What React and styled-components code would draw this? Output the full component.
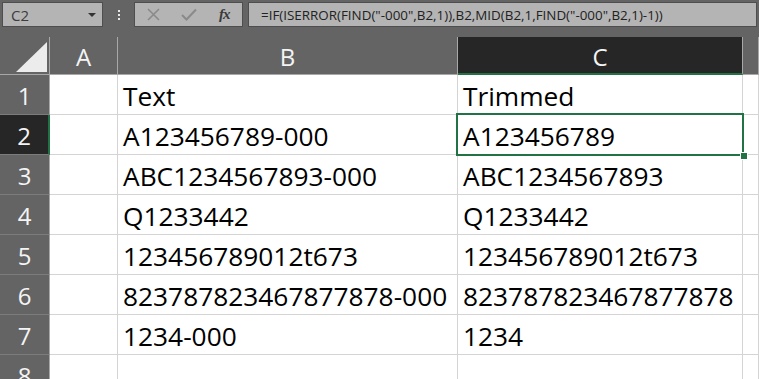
import styled, { createGlobalStyle } from "styled-components";

const GlobalStyle = createGlobalStyle`
  html, body {
    margin: 0;
    padding: 0;
    background: #646464;
  }
  body {
    font-family: "Open Sans", "Noto Sans", sans-serif;
  }
`;

const Window = styled.div`
  width: 759px;
  height: 379px;
  overflow: hidden;
  background: #646464;
  display: flex;
  flex-direction: column;
`;

const FormulaBar = styled.div`
  display: flex;
  flex-shrink: 0;
  height: 37px;
  padding: 2px 2px 10px 2px;
  box-sizing: border-box;
`;

const NameBox = styled.div`
  width: 101px;
  box-sizing: border-box;
  background: #b4b4b4;
  border: 1px solid #4e4e4e;
  display: flex;
  align-items: center;
  justify-content: space-between;
  padding: 0 6px 0 8px;
  font-size: 15px;
  color: #3c3c3c;
`;

const DropArrow = styled.span`
  width: 0;
  height: 0;
  border-left: 4px solid transparent;
  border-right: 4px solid transparent;
  border-top: 4px solid #333;
`;

const Grip = styled.div`
  width: 31px;
  display: flex;
  flex-direction: column;
  align-items: center;
  justify-content: center;
  gap: 2px;

  span {
    width: 2px;
    height: 2px;
    background: #e8e8e8;
  }
`;

const ButtonGroup = styled.div`
  width: 109px;
  box-sizing: border-box;
  background: #b4b4b4;
  border: 1px solid #4e4e4e;
  display: flex;
  align-items: center;
  padding-left: 1px;
`;

const BarButton = styled.div`
  width: 36px;
  height: 100%;
  display: flex;
  align-items: center;
  justify-content: center;
  color: ${(p) => (p.$dim ? "#8a8a8a" : "#3a3a3a")};
`;

const Fx = styled.span`
  font-family: "Liberation Serif", "DejaVu Serif", serif;
  font-style: italic;
  font-weight: bold;
  font-size: 15px;
  letter-spacing: -1px;
`;

const FormulaInput = styled.div`
  flex: 1;
  margin-left: 5px;
  box-sizing: border-box;
  background: #b4b4b4;
  border: 1px solid #4e4e4e;
  display: flex;
  align-items: center;
  padding-left: 12px;
  font-size: 13.4px;
  color: #222;
  white-space: nowrap;
  overflow: hidden;
`;

const Sheet = styled.div`
  display: grid;
  grid-template-columns: 50px 68px 340px 285px 1fr;
  grid-template-rows: 38px repeat(8, 40px);
`;

const Corner = styled.div`
  box-sizing: border-box;
  background: #646464;
  border-right: 1px solid #a8a8a8;
  border-bottom: 1px solid #a8a8a8;
  display: flex;
  align-items: flex-end;
  justify-content: flex-end;
  padding: 0 2px 2px 0;
`;

const ColHeader = styled.div`
  box-sizing: border-box;
  background: ${(p) => (p.$selected ? "#262626" : "#646464")};
  border-right: 1px solid #a8a8a8;
  border-bottom: ${(p) => (p.$selected ? "2px solid #217346" : "1px solid #a8a8a8")};
  color: #f4f4f4;
  font-size: 24px;
  line-height: 24px;
  display: flex;
  justify-content: center;
  align-items: flex-end;
  padding-bottom: ${(p) => (p.$selected ? "4px" : "5px")};
`;

const RowHeader = styled.div`
  box-sizing: border-box;
  background: ${(p) => (p.$selected ? "#262626" : "#646464")};
  border-right: ${(p) => (p.$selected ? "2px solid #217346" : "1px solid #a8a8a8")};
  border-bottom: 1px solid #7c7c7c;
  color: #f4f4f4;
  font-size: 24px;
  line-height: 24px;
  display: flex;
  justify-content: center;
  align-items: flex-end;
  padding-bottom: 6px;
`;

const Cell = styled.div`
  position: relative;
  box-sizing: border-box;
  background: #fff;
  border-right: 1px solid #d4d4d4;
  border-bottom: 1px solid #d4d4d4;
  font-size: 26.3px;
  line-height: 26px;
  color: #000;
  white-space: nowrap;
  display: flex;
  align-items: flex-end;
  padding: 0 0 5px 5px;
  z-index: ${(p) => (p.$active ? 2 : "auto")};
`;

const Selection = styled.div`
  position: absolute;
  top: -2px;
  left: -2px;
  right: -2px;
  bottom: -2px;
  border: 2px solid #217346;
  pointer-events: none;
`;

const FillHandle = styled.div`
  position: absolute;
  right: -6px;
  bottom: -6px;
  width: 6px;
  height: 6px;
  background: #217346;
  border: 1px solid #fff;
`;

const rows = [
  ["Text", "Trimmed"],
  ["A123456789-000", "A123456789"],
  ["ABC1234567893-000", "ABC1234567893"],
  ["Q1233442", "Q1233442"],
  ["123456789012t673", "123456789012t673"],
  ["823787823467877878-000", "823787823467877878"],
  ["1234-000", "1234"],
  ["", ""],
];

const formula = '=IF(ISERROR(FIND("-000",B2,1)),B2,MID(B2,1,FIND("-000",B2,1)-1))';

export default function App() {
  return (
    <Window>
      <GlobalStyle />
      <FormulaBar>
        <NameBox>
          <span>C2</span>
          <DropArrow />
        </NameBox>
        <Grip>
          <span />
          <span />
          <span />
        </Grip>
        <ButtonGroup>
          <BarButton $dim>
            <svg width="13" height="13" viewBox="0 0 13 13">
              <path d="M1 1 L12 12 M12 1 L1 12" stroke="currentColor" strokeWidth="1.6" fill="none" />
            </svg>
          </BarButton>
          <BarButton $dim>
            <svg width="16" height="13" viewBox="0 0 16 13">
              <path d="M1 7 L5.5 11.5 L15 1.5" stroke="currentColor" strokeWidth="2" fill="none" />
            </svg>
          </BarButton>
          <BarButton>
            <Fx>fx</Fx>
          </BarButton>
        </ButtonGroup>
        <FormulaInput>{formula}</FormulaInput>
      </FormulaBar>

      <Sheet>
        <Corner>
          <svg width="31" height="30" viewBox="0 0 31 30">
            <polygon points="31,0 31,30 0,30" fill="#ececec" />
          </svg>
        </Corner>
        <ColHeader>A</ColHeader>
        <ColHeader>B</ColHeader>
        <ColHeader $selected>C</ColHeader>
        <ColHeader />

        {rows.map((row, i) => (
          <Row key={i} index={i} row={row} />
        ))}
      </Sheet>
    </Window>
  );
}

function Row({ index, row }) {
  const active = index === 1;
  return (
    <>
      <RowHeader $selected={active}>{index + 1}</RowHeader>
      <Cell />
      <Cell>{row[0]}</Cell>
      <Cell $active={active}>
        {row[1]}
        {active && (
          <Selection>
            <FillHandle />
          </Selection>
        )}
      </Cell>
      <Cell />
    </>
  );
}
